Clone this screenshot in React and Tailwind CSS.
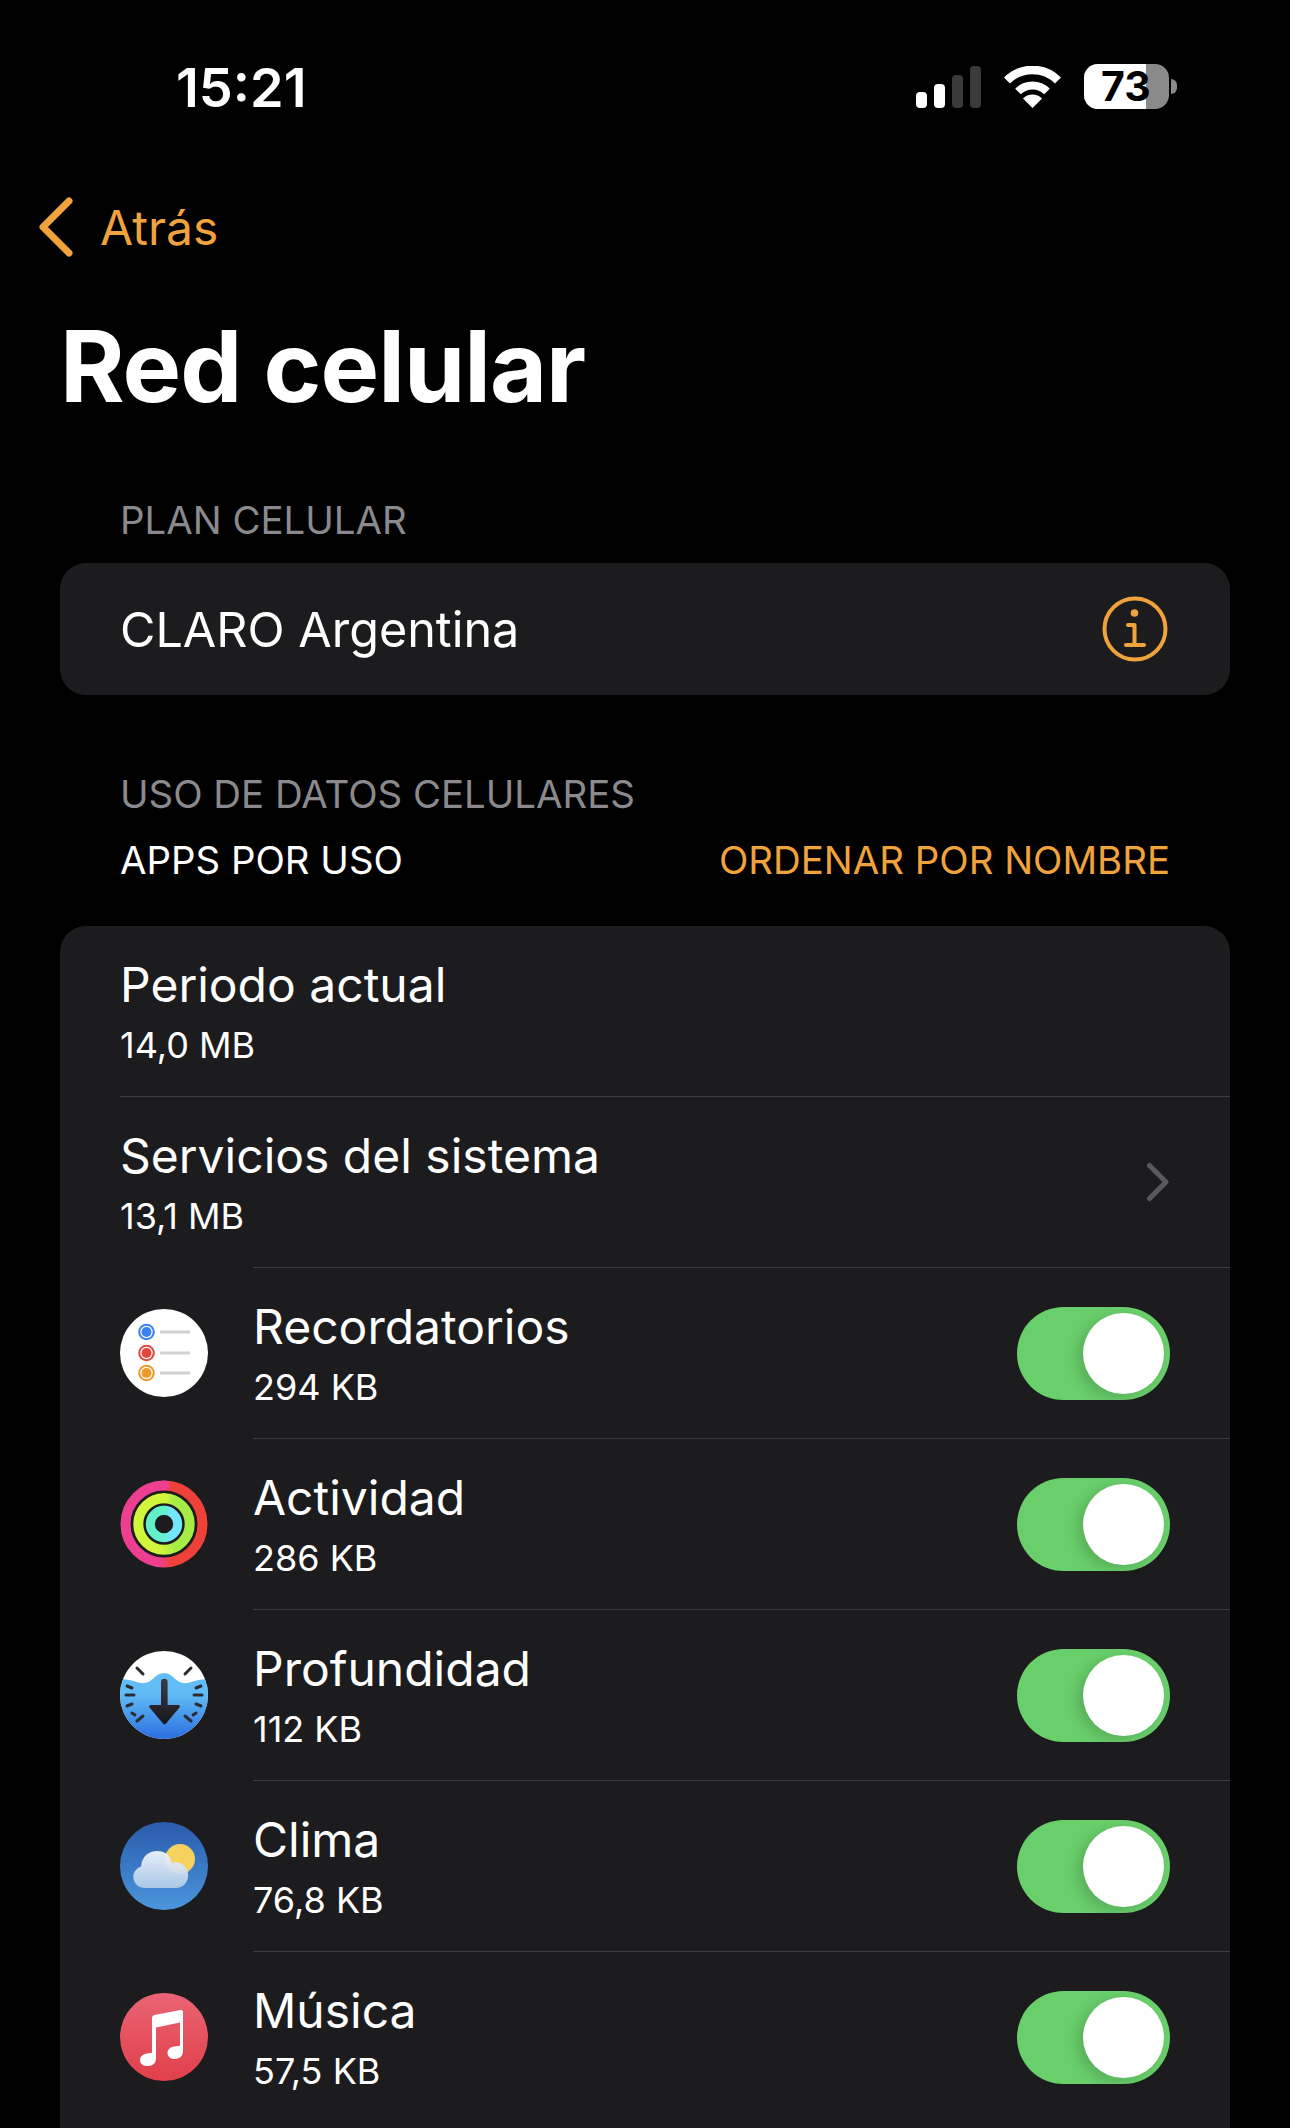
const apps = [
  { name: 'Recordatorios', size: '294 KB', icon: RemindersIcon },
  { name: 'Actividad', size: '286 KB', icon: ActivityIcon },
  { name: 'Profundidad', size: '112 KB', icon: DepthIcon },
  { name: 'Clima', size: '76,8 KB', icon: WeatherIcon },
  { name: 'Música', size: '57,5 KB', icon: MusicIcon },
];

function RemindersIcon() {
  const dots = [
    { y: 23, color: '#3b82f0' },
    { y: 44, color: '#e0483e' },
    { y: 64, color: '#eb9a2d' },
  ];
  return (
    <svg width="88" height="88" viewBox="0 0 88 88">
      <circle cx="44" cy="44" r="44" fill="#ffffff" />
      {dots.map((d) => (
        <g key={d.y}>
          <circle cx="26.5" cy={d.y} r="8.3" fill={d.color} />
          <circle cx="26.5" cy={d.y} r="6.2" fill="#ffffff" />
          <circle cx="26.5" cy={d.y} r="5" fill={d.color} />
          <rect x="40" y={d.y - 1.5} width="30" height="3" fill="#d2d2d4" />
        </g>
      ))}
    </svg>
  );
}

function ActivityIcon() {
  return (
    <svg width="88" height="88" viewBox="0 0 88 88">
      <defs>
        <linearGradient id="ringOuter" x1="0" y1="0" x2="1" y2="0">
          <stop offset="0.45" stopColor="#ec3f92" />
          <stop offset="0.6" stopColor="#ef4138" />
        </linearGradient>
        <linearGradient id="ringMid" x1="0" y1="0" x2="1" y2="0">
          <stop offset="0.4" stopColor="#d2f73a" />
          <stop offset="0.75" stopColor="#a6ec45" />
        </linearGradient>
        <linearGradient id="ringIn" x1="0" y1="0" x2="1" y2="0">
          <stop offset="0.35" stopColor="#62f0c8" />
          <stop offset="0.75" stopColor="#74e6fb" />
        </linearGradient>
      </defs>
      <circle cx="44" cy="44" r="38.5" fill="none" stroke="url(#ringOuter)" strokeWidth="10" />
      <circle cx="44" cy="44" r="25.7" fill="none" stroke="url(#ringMid)" strokeWidth="10" />
      <circle cx="44" cy="44" r="13.7" fill="none" stroke="url(#ringIn)" strokeWidth="9" />
      <circle cx="44" cy="5.5" r="5" fill="#ec3f92" />
      <circle cx="44" cy="18.3" r="5" fill="#d2f73a" />
      <circle cx="44" cy="30.3" r="4.5" fill="#62f0c8" />
    </svg>
  );
}

function DepthIcon() {
  const ticks = [
    [17, 17, 23, 23], [7, 35, 12, 37], [6, 44, 14, 44], [7, 55, 12, 53], [12, 62, 15, 64], [17, 70, 23, 65],
    [71, 17, 65, 23], [81, 35, 76, 37], [82, 44, 74, 44], [81, 55, 76, 53], [76, 62, 73, 64], [71, 70, 65, 65],
  ];
  return (
    <svg width="88" height="88" viewBox="0 0 88 88">
      <defs>
        <linearGradient id="water" x1="0" y1="0" x2="0" y2="1">
          <stop offset="0.3" stopColor="#62bdf6" />
          <stop offset="1" stopColor="#2b6fe0" />
        </linearGradient>
        <linearGradient id="arrow" x1="0" y1="0" x2="0" y2="1">
          <stop offset="0" stopColor="#3c3c44" />
          <stop offset="1" stopColor="#17171c" />
        </linearGradient>
        <clipPath id="depthClip">
          <circle cx="44" cy="44" r="44" />
        </clipPath>
      </defs>
      <g clipPath="url(#depthClip)">
        <rect width="88" height="88" fill="#ffffff" />
        <path d="M0 28 C 12 28 18 33 25 32 C 33 31 35 22 44 22 C 53 22 55 31 63 32 C 70 33 76 28 88 28 L88 88 L0 88 Z" fill="url(#water)" />
      </g>
      {ticks.map((t, i) => (
        <line key={i} x1={t[0]} y1={t[1]} x2={t[2]} y2={t[3]} stroke="#2a2c34" strokeWidth="3" strokeLinecap="round" />
      ))}
      <path d="M41 31 a3.3 3.3 0 0 1 6.6 0 V54 H58.5 a1.5 1.5 0 0 1 1 2.5 L46 72.5 a2 2 0 0 1 -3 0 L29.5 56.5 a1.5 1.5 0 0 1 1 -2.5 H41 Z" fill="url(#arrow)" />
    </svg>
  );
}

function WeatherIcon() {
  return (
    <svg width="88" height="88" viewBox="0 0 88 88">
      <defs>
        <linearGradient id="sky" x1="0" y1="0" x2="0" y2="1">
          <stop offset="0" stopColor="#2a5cab" />
          <stop offset="1" stopColor="#4a96dc" />
        </linearGradient>
        <linearGradient id="cloud" x1="0" y1="0" x2="0" y2="1">
          <stop offset="0" stopColor="#f2f5fa" stopOpacity="0.95" />
          <stop offset="1" stopColor="#b3cde8" stopOpacity="0.92" />
        </linearGradient>
      </defs>
      <circle cx="44" cy="44" r="44" fill="url(#sky)" />
      <circle cx="60" cy="37" r="15" fill="#f5d15f" />
      <path d="M24 66 a11 11 0 0 1 -3 -21.5 C 22 34 29 29 37 29 C 45 29 50 33 52 41 C 54 40 56 40 58 40.5 C 65 42 69 48 68 55 C 67 62 62 66 56 66 Z" fill="url(#cloud)" />
    </svg>
  );
}

function MusicIcon() {
  return (
    <svg width="88" height="88" viewBox="0 0 88 88">
      <defs>
        <linearGradient id="musicBg" x1="0" y1="0" x2="0" y2="1">
          <stop offset="0" stopColor="#ea6474" />
          <stop offset="1" stopColor="#e13f4b" />
        </linearGradient>
      </defs>
      <circle cx="44" cy="44" r="44" fill="url(#musicBg)" />
      <path d="M32 25 Q32 22.5 34.5 22 L60.5 17 Q63 16.5 63 19 V58 C63 63 59.5 66 54.5 66 C50.5 66 47.5 63.5 47.5 60 C47.5 56.5 50.5 54 54.5 53.5 L60 52.7 V29.5 L36 34.5 V65 C36 70.5 32.5 73 27.5 73 C23.5 73 20 71 20 67 C20 63.5 23 61 27 60.5 L32 59.7 Z" fill="#ffffff" />
    </svg>
  );
}

function Toggle() {
  return (
    <div className="flex h-[93px] w-[153px] shrink-0 items-center justify-end rounded-full bg-[#69cf6b] pr-[6px]">
      <div className="h-[81px] w-[81px] rounded-full bg-white shadow-[-6px_4px_14px_rgba(0,0,0,0.16)]" />
    </div>
  );
}

function StatusBar() {
  return (
    <div className="flex h-[176px] items-center justify-between pl-[176px] pr-[113px]">
      <span className="text-[54px] font-semibold leading-none text-white">15:21</span>
      <div className="flex items-center">
        <svg width="66" height="42" viewBox="0 0 66 42" className="mr-[22px] mt-[-3px]">
          <rect x="0" y="26" width="11" height="16" rx="4" fill="#ffffff" />
          <rect x="18" y="18" width="11" height="24" rx="4" fill="#ffffff" />
          <rect x="36" y="9" width="11" height="33" rx="4" fill="#3a3a3a" />
          <rect x="54" y="0" width="11" height="42" rx="4" fill="#3a3a3a" />
        </svg>
        <svg width="57" height="42" viewBox="0 0 57 42" className="mr-[23px] mt-[-3px]">
          <path d="M3 14.5 A36 36 0 0 1 54 14.5" fill="none" stroke="#ffffff" strokeWidth="8.5" />
          <path d="M14 25.5 A20.5 20.5 0 0 1 43 25.5" fill="none" stroke="#ffffff" strokeWidth="8" />
          <path d="M28.5 42 L19 32.5 A13.5 13.5 0 0 1 38 32.5 Z" fill="#ffffff" />
        </svg>
        <div className="relative mt-[-3px] h-[45px] w-[85px] rounded-[14px] bg-[#8a8a8a]">
          <div className="h-full w-[62px] rounded-l-[14px] bg-white" />
          <span className="absolute left-[17px] top-0 text-[41px] font-bold leading-[45px] text-black">73</span>
        </div>
        <div className="ml-[2px] mt-[-3px] h-[15px] w-[6px] rounded-r-full bg-[#8a8a8a]" />
      </div>
    </div>
  );
}

function SectionLabel({ children }) {
  return <div className="pl-[120px] text-[38.4px] leading-[44px] text-[#8a8a8e]">{children}</div>;
}

function UsageRow({ title, sub, indent, children, first }) {
  return (
    <div className={`flex items-stretch ${first ? 'h-[170px]' : 'h-[171px]'}`}>
      {indent}
      <div className={`flex flex-1 items-center justify-between pr-[60px] ${first ? '' : 'border-t border-[#3d3d40]'}`}>
        <div className="flex flex-col">
          <span className="text-[48px] leading-[60px] text-white">{title}</span>
          <span className="mt-[8px] text-[36px] leading-[44px] text-white">{sub}</span>
        </div>
        {children}
      </div>
    </div>
  );
}

export default function App() {
  return (
    <div className="h-[2128px] w-[1290px] overflow-hidden bg-black font-['Inter',sans-serif]">
      <StatusBar />

      <div className="flex h-[102px] items-center pl-[38px] text-[#f0a33c]">
        <svg width="36" height="60" viewBox="0 0 36 60">
          <path d="M31 4 L5 30 L31 56" fill="none" stroke="#f0a33c" strokeWidth="7" strokeLinecap="round" strokeLinejoin="round" />
        </svg>
        <span className="ml-[26px] pt-[2px] text-[48px] leading-none">Atrás</span>
      </div>

      <h1 className="mt-[33px] pl-[60px] text-[98.5px] font-bold leading-[112px] tracking-[-1px] text-white">Red celular</h1>

      <div className="mt-[75px]">
        <SectionLabel>PLAN CELULAR</SectionLabel>
      </div>
      <div className="mx-[60px] mt-[21px] flex h-[132px] items-center justify-between rounded-[26px] bg-[#1c1c1e] pl-[60px] pr-[62px]">
        <span className="pt-[3px] text-[48.5px] leading-none text-white">CLARO Argentina</span>
        <svg width="66" height="66" viewBox="0 0 66 66">
          <circle cx="33" cy="33" r="30.5" fill="none" stroke="#f0a33c" strokeWidth="4" />
          <circle cx="32.5" cy="17" r="3.8" fill="#f0a33c" />
          <path d="M26 29 H32.5 V49 M24 49 H42" fill="none" stroke="#f0a33c" strokeWidth="4" strokeLinecap="round" strokeLinejoin="round" />
        </svg>
      </div>

      <div className="mt-[77px]">
        <SectionLabel>USO DE DATOS CELULARES</SectionLabel>
      </div>
      <div className="mt-[22px] flex items-center justify-between px-[120px] text-[38.4px] leading-[44px]">
        <span className="text-white">APPS POR USO</span>
        <span className="text-[#f0a33c]">ORDENAR POR NOMBRE</span>
      </div>

      <div className="mx-[60px] mt-[44px] rounded-t-[26px] bg-[#1c1c1e] pb-[40px]">
        <UsageRow first title="Periodo actual" sub="14,0 MB" indent={<div className="w-[60px] shrink-0" />} />
        <UsageRow title="Servicios del sistema" sub="13,1 MB" indent={<div className="w-[60px] shrink-0" />}>
          <svg width="24" height="40" viewBox="0 0 24 40">
            <path d="M3.5 3.5 L20 20 L3.5 36.5" fill="none" stroke="#5a5a5e" strokeWidth="5" strokeLinecap="round" strokeLinejoin="round" />
          </svg>
        </UsageRow>
        {apps.map((app) => (
          <UsageRow
            key={app.name}
            title={app.name}
            sub={app.size}
            indent={
              <div className="flex w-[193px] shrink-0 items-center pl-[60px]">
                <app.icon />
              </div>
            }
          >
            <Toggle />
          </UsageRow>
        ))}
      </div>
    </div>
  );
}
